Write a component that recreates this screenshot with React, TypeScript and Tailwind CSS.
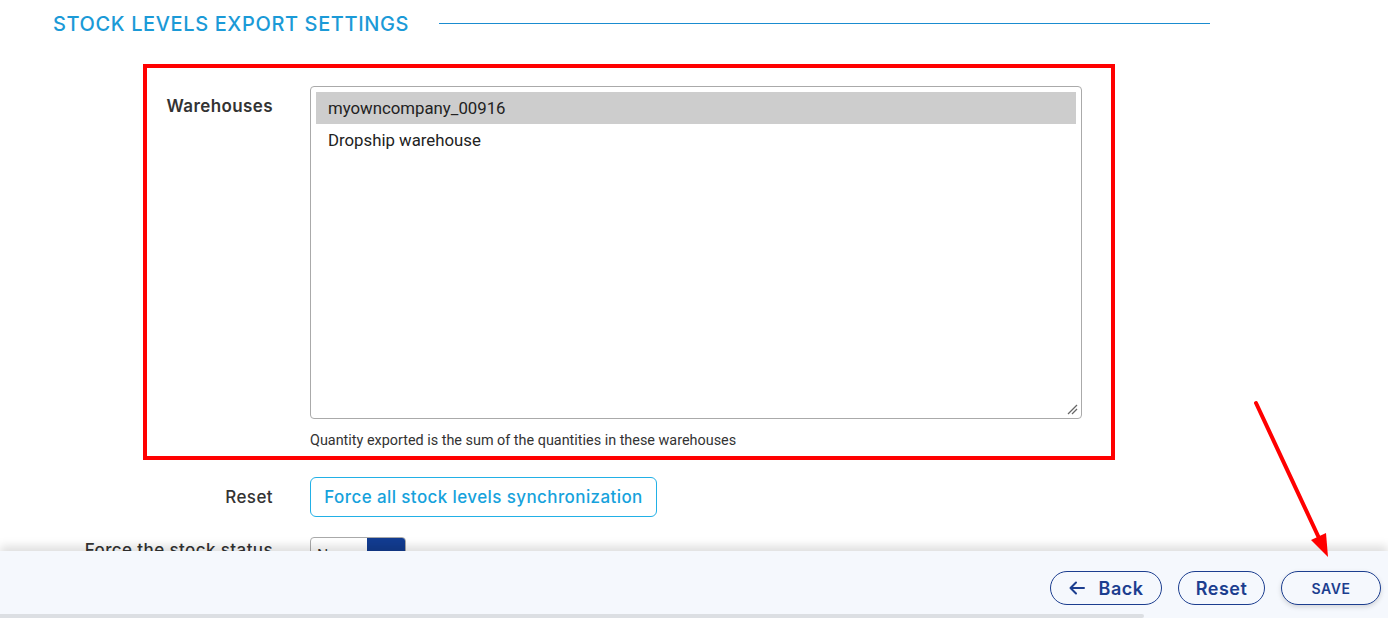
import React from "react";

export default function App() {
  const mont = { fontFamily: "Inter, 'Noto Sans', sans-serif" };
  return (
    <div className="relative h-[618px] w-[1388px] overflow-hidden bg-white" style={mont}>
      {/* Heading */}
      <div className="flex items-center pl-[53px] pt-[11px]">
        <h2 className="translate-y-[1px] text-[20px] leading-[24px] font-medium tracking-[0.62px] text-[#1b9ad7]">STOCK LEVELS EXPORT SETTINGS</h2>
        <div className="ml-[30px] h-px w-[771px] bg-[#1a8cd0]" />
      </div>

      {/* Red highlighted box */}
      <div className="ml-[143px] mt-[29px] w-[972px] border-4 border-[#ff0000] pt-[18px] pb-[6px]">
        <div className="flex">
          <div className="w-[126px] pt-[8px] text-right text-[17px] leading-[24px] font-semibold tracking-[0.4px] text-[#333]">Warehouses</div>
          <div className="ml-[37px] w-[772px]">
            <div className="relative h-[333px] rounded-[4px] border border-[#aaaaaa] p-[5px]" style={{ fontFamily: "Roboto, sans-serif" }}>
              <div className="flex h-[32px] items-center bg-[#cdcdcd] pl-[12px] pt-[2px] text-[16.8px] text-[#222]">myowncompany_00916</div>
              <div className="flex h-[32px] items-center pl-[12px] pt-[2px] text-[16.8px] text-[#222]">Dropship warehouse</div>
              <svg className="absolute bottom-[3px] right-[3px]" width="12" height="12" viewBox="0 0 12 12">
                <line x1="2" y1="11" x2="11" y2="2" stroke="#666" strokeWidth="1.3" />
                <line x1="6" y1="11" x2="11" y2="6" stroke="#666" strokeWidth="1.3" />
              </svg>
            </div>
            <div className="mt-[13px] text-[14.4px] leading-[18px] text-[#333]" style={{ fontFamily: "Roboto, sans-serif" }}>
              Quantity exported is the sum of the quantities in these warehouses
            </div>
          </div>
        </div>
      </div>

      {/* Reset row */}
      <div className="ml-[53px] mt-[17px] flex items-center">
        <div className="w-[220px] pt-[2px] text-right text-[17px] font-medium tracking-[0.4px] text-[#333]">Reset</div>
        <button className="ml-[37px] h-[40px] w-[347px] rounded-[6px] border border-[#22b0e6] pt-[1px] text-[17px] font-medium tracking-[0.4px] text-[#16a2dc]">
          Force all stock levels synchronization
        </button>
      </div>

      {/* Force stock status row */}
      <div className="ml-[53px] mt-[20px] flex items-start">
        <div className="w-[220px] pt-[1px] text-right text-[17px] font-medium tracking-[0.4px] text-[#333]">Force the stock status</div>
        <div className="ml-[37px] flex h-[36px] w-[96px] overflow-hidden rounded-[4px] border border-[#aaa]">
          <div className="flex w-[56px] items-start pl-[6px] pt-[6px] text-[15px] text-[#333]">No</div>
          <div className="flex-1 bg-[#123c91]" />
        </div>
      </div>

      {/* Footer */}
      <div className="absolute bottom-0 left-0 right-0 h-[67px] bg-[#f5f8fd] shadow-[0_-5px_9px_rgba(0,0,0,0.13)]">
        <div className="flex h-[63px] items-center justify-end gap-[16px] pr-[7px] pt-[11px]">
          <button className="flex h-[34px] w-[112px] items-center justify-center gap-[14px] rounded-full border border-[#1c3e8f] text-[18px] font-semibold tracking-[0.5px] text-[#1c3e8f]">
            <svg width="16" height="14" viewBox="0 0 16 14" fill="none" stroke="#1c3e8f" strokeWidth="2" strokeLinecap="round" strokeLinejoin="round">
              <path d="M15 7H1.5M7 1.5L1.5 7L7 12.5" />
            </svg>
            <span>Back</span>
          </button>
          <button className="h-[34px] w-[87px] rounded-full border border-[#1c3e8f] text-[18px] font-semibold tracking-[0.5px] text-[#1c3e8f]">Reset</button>
          <button className="h-[34px] w-[100px] rounded-full border border-[#1c3e8f] bg-[#f5f8fd] text-[14px] font-semibold tracking-[0.5px] text-[#1c3e8f] shadow-[0_2px_5px_rgba(0,0,0,0.15)]">SAVE</button>
        </div>
        <div className="h-[4px] w-[1144px] rounded-r-full bg-[#dcdfe3]" />
      </div>

      {/* Red arrow annotation */}
      <svg className="pointer-events-none absolute left-0 top-0" width="1388" height="618">
        <line x1="1256" y1="403" x2="1319" y2="538" stroke="#ff0000" strokeWidth="4" strokeLinecap="round" />
        <polygon points="1328,557 1311,540 1326,533" fill="#ff0000" />
      </svg>
    </div>
  );
}
